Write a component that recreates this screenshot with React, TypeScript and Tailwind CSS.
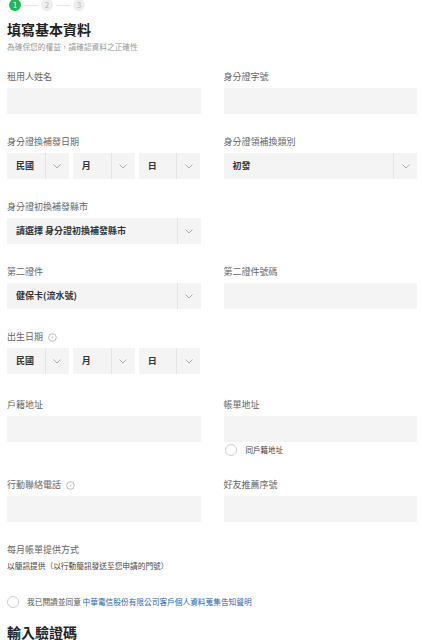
import React from "react";

const font = { fontFamily: '"Noto Sans CJK TC", "Noto Sans", sans-serif' };

const Chevron = () => (
    <svg width="8" height="5" viewBox="0 0 8 5" fill="none">
        <path d="M0.5 0.5 L4 4 L7.5 0.5" stroke="#9a9a9a" strokeWidth="0.8" />
    </svg>
);

const InfoIcon = () => (
    <svg width="9" height="9" viewBox="0 0 9 9" className="ml-[5px]">
        <circle cx="4.5" cy="4.5" r="3.8" fill="none" stroke="#aaa" strokeWidth="0.8" />
        <circle cx="4.5" cy="4.5" r="1" fill="#ccc" />
    </svg>
);

const Label = ({ text, info }: { text: string; info?: boolean }) => (
    <div className="flex items-center h-[12px] text-[9px] text-[#666] mb-[5px]">
        {text}
        {info && <InfoIcon />}
    </div>
);

const Input = () => <div className="h-[26px] bg-[#f4f4f4]" />;

const Select = ({ value }: { value: string }) => (
    <div className="flex h-[26px] bg-[#f4f4f4]">
        <div className="flex-1 flex items-center pl-[9px] text-[9px] font-bold text-[#333] whitespace-nowrap overflow-hidden">
            {value}
        </div>
        <div className="w-[24px] flex items-center justify-center border-l border-[#e4e4e4]">
            <Chevron />
        </div>
    </div>
);

const DateSelects = () => (
    <div className="grid grid-cols-3 gap-[4px]">
        <Select value="民國" />
        <Select value="月" />
        <Select value="日" />
    </div>
);

const Radio = () => <div className="w-[12px] h-[12px] rounded-full border border-[#cfcfcf] bg-white shrink-0" />;

const Steps = () => (
    <div className="flex items-center -mt-[1px] pl-[9px] h-[12px]">
        <div className="w-[12px] h-[12px] rounded-full bg-[#1db954] text-white text-[8px] flex items-center justify-center">1</div>
        <div className="w-[14px] h-px bg-[#e6e6e6] mx-[3px]" />
        <div className="w-[12px] h-[12px] rounded-full bg-[#eeeeee] text-[#bbb] text-[8px] flex items-center justify-center">2</div>
        <div className="w-[14px] h-px bg-[#e6e6e6] mx-[3px]" />
        <div className="w-[12px] h-[12px] rounded-full bg-[#eeeeee] text-[#bbb] text-[8px] flex items-center justify-center">3</div>
    </div>
);

export default function App() {
    return (
        <div style={font} className="w-[422px] h-[640px] overflow-hidden bg-white pl-[7px] pr-[5px]">
            <div className="-ml-[7px]">
                <Steps />
            </div>
            <h1 className="mt-[9px] text-[14px] leading-[18px] font-bold text-[#222]">填寫基本資料</h1>
            <p className="mt-[4px] text-[7.7px] leading-[10px] text-[#999]">為確保您的權益，請確認資料之正確性</p>

            <div className="grid grid-cols-2 gap-x-[23px] gap-y-[22px] mt-[19px]">
                <div>
                    <Label text="租用人姓名" />
                    <Input />
                </div>
                <div>
                    <Label text="身分證字號" />
                    <Input />
                </div>

                <div>
                    <Label text="身分證換補發日期" />
                    <DateSelects />
                </div>
                <div>
                    <Label text="身分證領補換類別" />
                    <Select value="初發" />
                </div>

                <div>
                    <Label text="身分證初換補發縣市" />
                    <Select value="請選擇 身分證初換補發縣市" />
                </div>
                <div />

                <div>
                    <Label text="第二證件" />
                    <Select value="健保卡(流水號)" />
                </div>
                <div>
                    <Label text="第二證件號碼" />
                    <Input />
                </div>

                <div>
                    <Label text="出生日期" info />
                    <DateSelects />
                </div>
                <div />

                <div className="mt-[3px]">
                    <Label text="戶籍地址" />
                    <Input />
                </div>
                <div className="mt-[3px]">
                    <Label text="帳單地址" />
                    <Input />
                    <div className="flex items-center mt-[2px] pl-[1px]">
                        <Radio />
                        <span className="ml-[9px] text-[7.5px] text-[#444]">同戶籍地址</span>
                    </div>
                </div>

                <div className="mt-[1px]">
                    <Label text="行動聯絡電話" info />
                    <Input />
                </div>
                <div className="mt-[1px]">
                    <Label text="好友推薦序號" />
                    <Input />
                </div>
            </div>

            <div className="mt-[22px]">
                <Label text="每月帳單提供方式" />
                <p className="text-[7.7px] leading-[10px] text-[#444]">以簡訊提供（以行動簡訊發送至您申請的門號）</p>
            </div>

            <div className="flex items-center mt-[25px]">
                <Radio />
                <span className="ml-[8px] text-[7.7px] text-[#555] whitespace-nowrap">
                    我已閱讀並同意 <span className="text-[#2b5fb5]">中華電信股份有限公司客戶個人資料蒐集告知聲明</span>
                </span>
            </div>

            <h2 className="mt-[15px] text-[14px] leading-[18px] font-bold text-[#222]">輸入驗證碼</h2>
        </div>
    );
}
